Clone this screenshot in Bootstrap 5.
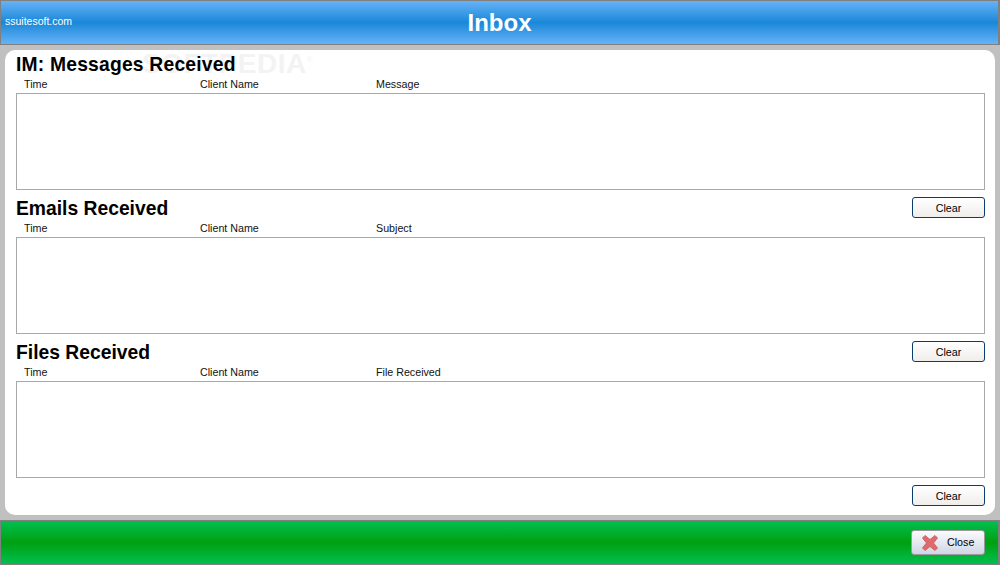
<!DOCTYPE html>
<html lang="en">
<head>
<meta charset="utf-8">
<title>Inbox</title>
<link href="https://cdn.jsdelivr.net/npm/bootstrap@5.3.0/dist/css/bootstrap.min.css" rel="stylesheet">
<style>
html,body{height:565px;overflow:hidden}
body{background:#c0c0c0;font-family:"Liberation Sans",Arial,sans-serif;color:#000}
.app{height:565px}
.topbar{height:45px;border:1px solid #808080;border-right-width:2px;background:linear-gradient(#66b2f8 0,#1a88d8 50%,#66b2f8 100%);color:#fff}
.site{font-size:10.5px;left:4px;top:14px;line-height:13px}
.apptitle{font-size:24px;font-weight:700;line-height:44px}
.panel{background:#fff;margin:5px;height:465px;border-radius:10px;padding:0 10px 0 11px}
.sect{height:144px}
.sect-head{height:27px}
.sect-title{font-size:19.3px;font-weight:700;line-height:29px;margin:0;position:relative;z-index:2}
.sect-title-wide{letter-spacing:.2px}
.cols{height:16px;font-size:10.7px;line-height:14px;padding-left:8px;color:#111}
.colcell{width:176px}
.listbox{height:97px;border:1px solid #a8a8a8;background:#fff}
.foot-row{height:21px;margin-top:3px}
.clearbtn{width:73px;height:21px;margin-top:3px;padding:0;font-size:10.7px;line-height:18px;color:#000;border:1px solid #0c3d6e;border-radius:3px;background:linear-gradient(#fff,#f0eeea)}
.foot-row .clearbtn{margin-top:0}
.bottombar{height:45px;border:1px solid #808080;border-right-width:2px;background:linear-gradient(#00c050 0,#00a010 50%,#00c050 100%);padding-right:13px}
.closebtn{width:74px;height:25px;padding:0 0 0 9px;font-size:10.7px;color:#000;border:1px solid #9a9a9a;border-radius:3px;background:linear-gradient(#fbfbfd,#cfd6e4);gap:8px}
.wmark{left:142px;top:48px;font-size:28px;font-weight:700;letter-spacing:.5px;color:#f3f3f3;line-height:32px;pointer-events:none;z-index:1}
.wmark sup{font-size:8px;top:-1.4em;font-weight:400;letter-spacing:0}
</style>
</head>
<body>
<div class="app d-flex flex-column position-relative">
  <header class="topbar position-relative text-center">
    <span class="site position-absolute">ssuitesoft.com</span>
    <div class="apptitle">Inbox</div>
  </header>
  <main class="panel">
    <section class="sect">
      <div class="sect-head d-flex justify-content-between align-items-start"><h2 class="sect-title sect-title-wide">IM: Messages Received</h2></div>
      <div class="cols d-flex"><div class="colcell">Time</div><div class="colcell">Client Name</div><div>Message</div></div>
      <div class="listbox"></div>
    </section>
    <section class="sect">
      <div class="sect-head d-flex justify-content-between align-items-start"><h2 class="sect-title">Emails Received</h2><button type="button" class="btn clearbtn">Clear</button></div>
      <div class="cols d-flex"><div class="colcell">Time</div><div class="colcell">Client Name</div><div>Subject</div></div>
      <div class="listbox"></div>
    </section>
    <section class="sect">
      <div class="sect-head d-flex justify-content-between align-items-start"><h2 class="sect-title">Files Received</h2><button type="button" class="btn clearbtn">Clear</button></div>
      <div class="cols d-flex"><div class="colcell">Time</div><div class="colcell">Client Name</div><div>File Received</div></div>
      <div class="listbox"></div>
    </section>
    <div class="foot-row d-flex justify-content-end"><button type="button" class="btn clearbtn">Clear</button></div>
  </main>
  <footer class="bottombar d-flex align-items-center justify-content-end">
    <button type="button" class="btn closebtn d-flex align-items-center">
      <svg width="18" height="18" viewBox="0 0 18 18" aria-hidden="true"><path d="M1.500 4 4 1.500 9 5.500l5-4L16.500 4 12.500 9l4 5-2.500 2.500-5-4-5 4L1.500 14 5.500 9z" fill="#e2686c" stroke="#c76a6e" stroke-width="1"/></svg>
      <span>Close</span>
    </button>
  </footer>
  <div class="wmark position-absolute">SOFTPEDIA<sup>®</sup></div>
</div>
<script src="https://cdn.jsdelivr.net/npm/bootstrap@5.3.0/dist/js/bootstrap.bundle.min.js"></script>
</body>
</html>
